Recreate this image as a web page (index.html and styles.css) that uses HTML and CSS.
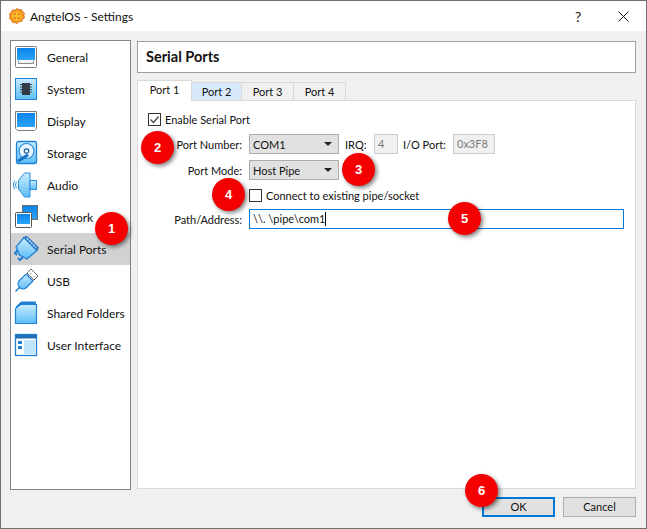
FILE: index.html
```html
<!DOCTYPE html>
<html lang="en">
<head>
    <meta charset="UTF-8">
    <title>AngtelOS - Settings</title>
    <link rel="stylesheet" href="styles.css">
</head>
<body>
    <svg class="defs" width="0" height="0">
        <defs>
            <linearGradient id="screen" x1="0" y1="0" x2="0" y2="1">
                <stop offset="0" stop-color="#0a84ea"/>
                <stop offset="1" stop-color="#2aa4f8"/>
            </linearGradient>
            <linearGradient id="light" x1="0" y1="0" x2="0" y2="1">
                <stop offset="0" stop-color="#c9ecff"/>
                <stop offset="1" stop-color="#5dbdf6"/>
            </linearGradient>
        </defs>
    </svg>

    <div class="window">
        <div class="titlebar">
            <svg class="app-icon" width="16" height="16" viewBox="0 0 16 16">
                <path d="M8 .5l2 1.300 2.400-.3 1 2.200 2 1.300-.5 2.400.6 2.300-1.900 1.500-.8 2.300-2.400.1L8 15.500l-2.300-1-2.400-.1-.9-2.300L.5 10.500 1 8 .5 5.700l1.900-1.500 1-2.200 2.400.2z" fill="#f59a23" stroke="#d9641a" stroke-width=".8"/>
                <circle cx="8" cy="8" r="4.600" fill="#fbc02d"/>
                <circle cx="6" cy="6" r="1.100" fill="#e2711d"/>
                <circle cx="10" cy="6" r="1.100" fill="#e2711d"/>
                <circle cx="6" cy="10" r="1.100" fill="#e2711d"/>
                <circle cx="10" cy="10" r="1.100" fill="#e2711d"/>
            </svg>
            <span class="title-text">AngtelOS - Settings</span>
            <span class="help-btn">?</span>
            <svg class="close-btn" width="11" height="11" viewBox="0 0 11 11">
                <path d="M.5.500l10 10M10.500.500l-10 10" stroke="#111" stroke-width="1" fill="none"/>
            </svg>
        </div>

        <div class="content">
            <div class="main">
                <ul class="sidebar">
                    <li class="side-item">
                        <svg class="side-icon" width="26" height="24" viewBox="0 0 26 24">
                            <rect x="2.500" y="1.500" width="21" height="21" rx="1" fill="#fff" stroke="#7d7d7d"/>
                            <rect x="4" y="3" width="18" height="12" fill="url(#screen)"/>
                            <path d="M5.500 15.500v3h15v-3" fill="#f4f4f4" stroke="#8a8a8a"/>
                        </svg>
                        <span>General</span>
                    </li>
                    <li class="side-item">
                        <svg class="side-icon" width="26" height="24" viewBox="0 0 26 24">
                            <rect x="2.500" y="1.500" width="21" height="21" fill="url(#light)" stroke="#1f83d8"/>
                            <rect x="9" y="6" width="8" height="12" fill="#333c46"/>
                            <path d="M7 7.500h2M7 10h2M7 12.500h2M7 15h2M17 7.500h2M17 10h2M17 12.500h2M17 15h2" stroke="#4a5560"/>
                        </svg>
                        <span>System</span>
                    </li>
                    <li class="side-item">
                        <svg class="side-icon" width="26" height="24" viewBox="0 0 26 24">
                            <path d="M2.500 2.500h21v17l-2 2h-17l-2-2z" fill="#fff" stroke="#7d7d7d"/>
                            <rect x="4" y="4" width="18" height="14" fill="url(#screen)"/>
                        </svg>
                        <span>Display</span>
                    </li>
                    <li class="side-item">
                        <svg class="side-icon" width="26" height="26" viewBox="0 0 26 26">
                            <rect x="3.500" y="1.500" width="20" height="22" rx="2" fill="url(#light)" stroke="#1f83d8" stroke-width="1.300"/>
                            <circle cx="13.500" cy="11" r="7.500" fill="#e6f6ff" stroke="#2a8fdc" stroke-width="1.200"/>
                            <circle cx="13.500" cy="11" r="2.200" fill="#fff" stroke="#1b5f9e" stroke-width="1.200"/>
                            <path d="M6 20.500l8-5" stroke="#1570c4" stroke-width="3" stroke-linecap="round"/>
                        </svg>
                        <span>Storage</span>
                    </li>
                    <li class="side-item">
                        <svg class="side-icon" width="26" height="26" viewBox="0 0 26 26">
                            <path d="M5.500 8.500l6-7.500h5.500v24h-5.500l-6-8z" fill="url(#light)" stroke="#2a8fdc"/>
                            <rect x="17" y="8.500" width="6.500" height="9" fill="url(#light)" stroke="#2a8fdc"/>
                            <path d="M3.500 10c-1.200 2-1.200 4 0 6M1.800 8.500c-1.800 3-1.800 6 0 9" fill="none" stroke="#2a8fdc"/>
                        </svg>
                        <span>Audio</span>
                    </li>
                    <li class="side-item">
                        <svg class="side-icon" width="26" height="26" viewBox="0 0 26 26">
                            <rect x="9.500" y="1.500" width="15" height="14" fill="url(#screen)" stroke="#6d6d6d"/>
                            <rect x="2.500" y="8.500" width="16" height="15" rx="1" fill="#fff" stroke="#555"/>
                            <rect x="4" y="10" width="13" height="10" fill="url(#screen)"/>
                        </svg>
                        <span>Network</span>
                    </li>
                    <li class="side-item selected">
                        <svg class="side-icon" width="26" height="26" viewBox="0 0 26 26">
                            <path d="M11 1.500L24 14.500 14 23 6.500 19 3 11z" fill="url(#light)" stroke="#1f7fd4" stroke-width="1.300"/>
                            <path d="M11 1.500l13 13 1.500-3L13.500 0z" fill="#3f8fd6" stroke="#2a6fb5"/>
                            <path d="M14 2.500l9 9" stroke="#cfe8fb" stroke-dasharray="1.500 1.500" stroke-width="1.500"/>
                            <path d="M5 14l-3 3 2 2M10 21l-3 3-2-2" fill="none" stroke="#1f7fd4" stroke-width="2"/>
                        </svg>
                        <span>Serial Ports</span>
                    </li>
                    <li class="side-item">
                        <svg class="side-icon" width="26" height="26" viewBox="0 0 26 26">
                            <path d="M13 6l7 7-6.500 6.500c-2 2-5 2-7 0s-2-5 0-7z" fill="url(#light)" stroke="#1f7fd4" stroke-width="1.200"/>
                            <path d="M6.500 19.500l-4 4" stroke="#1f7fd4" stroke-width="1.500"/>
                            <path d="M14 5l4-4 7 7-4 4z" fill="#fff" stroke="#666"/>
                            <path d="M17.500 5l.8.800M20.500 8l.8.800" stroke="#444"/>
                        </svg>
                        <span>USB</span>
                    </li>
                    <li class="side-item">
                        <svg class="side-icon" width="26" height="26" viewBox="0 0 26 26">
                            <path d="M3 7l5-5h14.500v3" fill="#1f7fd4" stroke="#1f7fd4"/>
                            <path d="M2.500 8.500l5-4h16v19h-21z" fill="url(#light)" stroke="#1f83d8" stroke-width="1.200"/>
                        </svg>
                        <span>Shared Folders</span>
                    </li>
                    <li class="side-item">
                        <svg class="side-icon" width="26" height="26" viewBox="0 0 26 26">
                            <rect x="2.500" y="2.500" width="21" height="21" fill="#fff" stroke="#1f7fd4" stroke-width="1.300"/>
                            <rect x="3" y="3" width="20" height="3.500" fill="#1f6fb8"/>
                            <rect x="11" y="8" width="11" height="14" fill="#bfe6fb"/>
                            <rect x="5" y="9" width="4" height="3" fill="#1f7fd4"/>
                            <rect x="5" y="14" width="4" height="3" fill="#1f7fd4"/>
                        </svg>
                        <span>User Interface</span>
                    </li>
                </ul>

                <div class="page">
                    <div class="page-header">Serial Ports</div>
                    <div class="tabs">
                        <div class="tab active">Port 1</div>
                        <div class="tab hover">Port 2</div>
                        <div class="tab">Port 3</div>
                        <div class="tab">Port 4</div>
                    </div>
                    <div class="tab-panel">
                        <div class="check-row first">
                            <svg class="checkbox" width="13" height="13" viewBox="0 0 13 13">
                                <rect x=".5" y=".5" width="12" height="12" fill="#fff" stroke="#333"/>
                                <path d="M2.500 6.500l3 3 5-6" fill="none" stroke="#444" stroke-width="1.200"/>
                            </svg>
                            <span>Enable Serial Port</span>
                        </div>
                        <div class="form-row port-row">
                            <span class="field-label">Port Number:</span>
                            <div class="combo"><span>COM1</span><i class="arrow"></i></div>
                            <span class="irq-label">IRQ:</span>
                            <div class="field disabled irq">4</div>
                            <span class="io-label">I/O Port:</span>
                            <div class="field disabled io">0x3F8</div>
                        </div>
                        <div class="form-row mode-row">
                            <span class="field-label">Port Mode:</span>
                            <div class="combo"><span>Host Pipe</span><i class="arrow"></i></div>
                        </div>
                        <div class="check-row connect">
                            <svg class="checkbox" width="13" height="13" viewBox="0 0 13 13">
                                <rect x=".5" y=".5" width="12" height="12" fill="#fff" stroke="#333"/>
                            </svg>
                            <span>Connect to existing pipe/socket</span>
                        </div>
                        <div class="form-row path-row">
                            <span class="field-label">Path/Address:</span>
                            <div class="field focused">\\. \pipe\com1<i class="caret"></i></div>
                        </div>
                    </div>
                </div>
            </div>

            <div class="buttons">
                <div class="btn default">OK</div>
                <div class="btn">Cancel</div>
            </div>
        </div>

        <div class="badge b1">1</div>
        <div class="badge b2">2</div>
        <div class="badge b3">3</div>
        <div class="badge b4">4</div>
        <div class="badge b5">5</div>
        <div class="badge b6">6</div>
    </div>
</body>
</html>
```

FILE: styles.css
```css
html, body {
    margin: 0;
    padding: 0;
}
body {
    font-family: Lato, "Noto Sans", Arial, sans-serif;
    font-size: 12px;
    color: #111;
    background-color: #6b6b6b;
}
.defs {
    position: absolute;
}
.window {
    position: relative;
    box-sizing: border-box;
    width: 647px;
    height: 529px;
    border: 1px solid #6f6f6f;
    background-color: #f0f0f0;
    overflow: hidden;
}

/* title bar */
.titlebar {
    display: flex;
    align-items: center;
    height: 30px;
    padding-left: 8px;
    background-color: #fff;
}
.app-icon {
    margin-right: 5px;
}
.title-text {
    flex: 1;
}
.help-btn {
    width: 32px;
    font-size: 14px;
    margin-right: 11px;
    text-align: left;
}
.close-btn {
    margin-right: 17px;
}

.content {
    padding: 9px 10px 0 9px;
}
.main {
    display: flex;
    gap: 6px;
    height: 450px;
}

/* left list */
.sidebar {
    box-sizing: border-box;
    width: 121px;
    margin: 0;
    padding: 0;
    list-style: none;
    background-color: #fff;
    border: 1px solid #82828c;
}
.side-item {
    display: flex;
    align-items: center;
    height: 32px;
    padding-left: 2px;
}
.side-item.selected {
    background-color: #d2d2d2;
}
.side-icon {
    flex: none;
    margin-right: 8px;
}
.side-item span {
    white-space: nowrap;
}

/* right side */
.page {
    width: 499px;
    font-size: 11px;
}
.page-header {
    box-sizing: border-box;
    height: 32px;
    margin-top: 1px;
    padding-left: 8px;
    line-height: 30px;
    font-size: 14.5px;
    font-weight: bold;
    background-color: #fff;
    border: 1px solid #a0a0a0;
}
.tabs {
    display: flex;
    align-items: flex-end;
    height: 20px;
    margin-top: 7px;
}
.tab {
    box-sizing: border-box;
    height: 18px;
    width: 53px;
    margin-left: -1px;
    line-height: 17px;
    text-align: center;
    background-color: #f0f0f0;
    border: 1px solid #d9d9d9;
    border-bottom: none;
}
.tab.active {
    position: relative;
    z-index: 1;
    width: 55px;
    height: 21px;
    margin-left: 0;
    margin-bottom: -1px;
    line-height: 18px;
    background-color: #fff;
}
.tab.hover {
    width: 51px;
    background-color: #d8eafa;
}
.tab-panel {
    box-sizing: border-box;
    height: 389px;
    padding: 11px 0 0 10px;
    background-color: #fff;
    border: 1px solid #d9d9d9;
}

/* form rows */
.check-row {
    display: flex;
    align-items: center;
    gap: 4px;
    height: 14px;
}
.check-row.connect {
    margin-top: 8px;
    margin-left: 101px;
}
.form-row {
    display: flex;
    align-items: center;
    height: 20px;
}
.port-row {
    margin-top: 8px;
}
.mode-row {
    margin-top: 6px;
}
.path-row {
    margin-top: 7px;
}
.field-label {
    width: 94px;
    margin-right: 7px;
    text-align: right;
}
.combo {
    box-sizing: border-box;
    display: flex;
    align-items: center;
    justify-content: space-between;
    width: 90px;
    height: 20px;
    padding: 0 6px 0 3px;
    background-color: #e1e1e1;
    border: 1px solid #adadad;
}
.arrow {
    width: 0;
    height: 0;
    border-left: 4px solid transparent;
    border-right: 4px solid transparent;
    border-top: 4px solid #222;
}
.field {
    box-sizing: border-box;
    height: 20px;
    padding-left: 3px;
    line-height: 18px;
    background-color: #fff;
    border: 1px solid #ccc;
}
.field.disabled {
    color: #7a7a7a;
    background-color: #f0f0f0;
}
.field.irq {
    width: 24px;
}
.field.io {
    width: 42px;
}
.field.focused {
    width: 375px;
    color: #111;
    border-color: #0078d7;
}
.irq-label {
    margin-left: 6px;
    width: 29px;
}
.io-label {
    margin-left: 5px;
    width: 50px;
}
.caret {
    display: inline-block;
    width: 1px;
    height: 14px;
    background-color: #000;
    vertical-align: -3px;
}

/* bottom buttons */
.buttons {
    display: flex;
    justify-content: flex-end;
    gap: 8px;
    margin-top: 7px;
    font-size: 11px;
}
.btn {
    box-sizing: border-box;
    width: 73px;
    height: 20px;
    line-height: 18px;
    text-align: center;
    background-color: #e1e1e1;
    border: 1px solid #adadad;
}
.btn.default {
    line-height: 16px;
    border: 2px solid #0078d7;
}

/* red numbered markers drawn over the dialog */
.badge {
    position: absolute;
    width: 33px;
    height: 33px;
    border-radius: 50%;
    line-height: 33px;
    text-align: center;
    font-family: "Liberation Sans", Arial, sans-serif;
    font-size: 13px;
    font-weight: bold;
    color: #fff;
    background-color: #f50000;
    box-shadow: 2px 2px 4px rgba(0, 0, 0, 0.5);
}
.b1 { left: 94px; top: 211px; }
.b2 { left: 140px; top: 130px; }
.b3 { left: 341px; top: 152px; }
.b4 { left: 211px; top: 177px; }
.b5 { left: 447px; top: 201px; }
.b6 { left: 464px; top: 473px; }
```
